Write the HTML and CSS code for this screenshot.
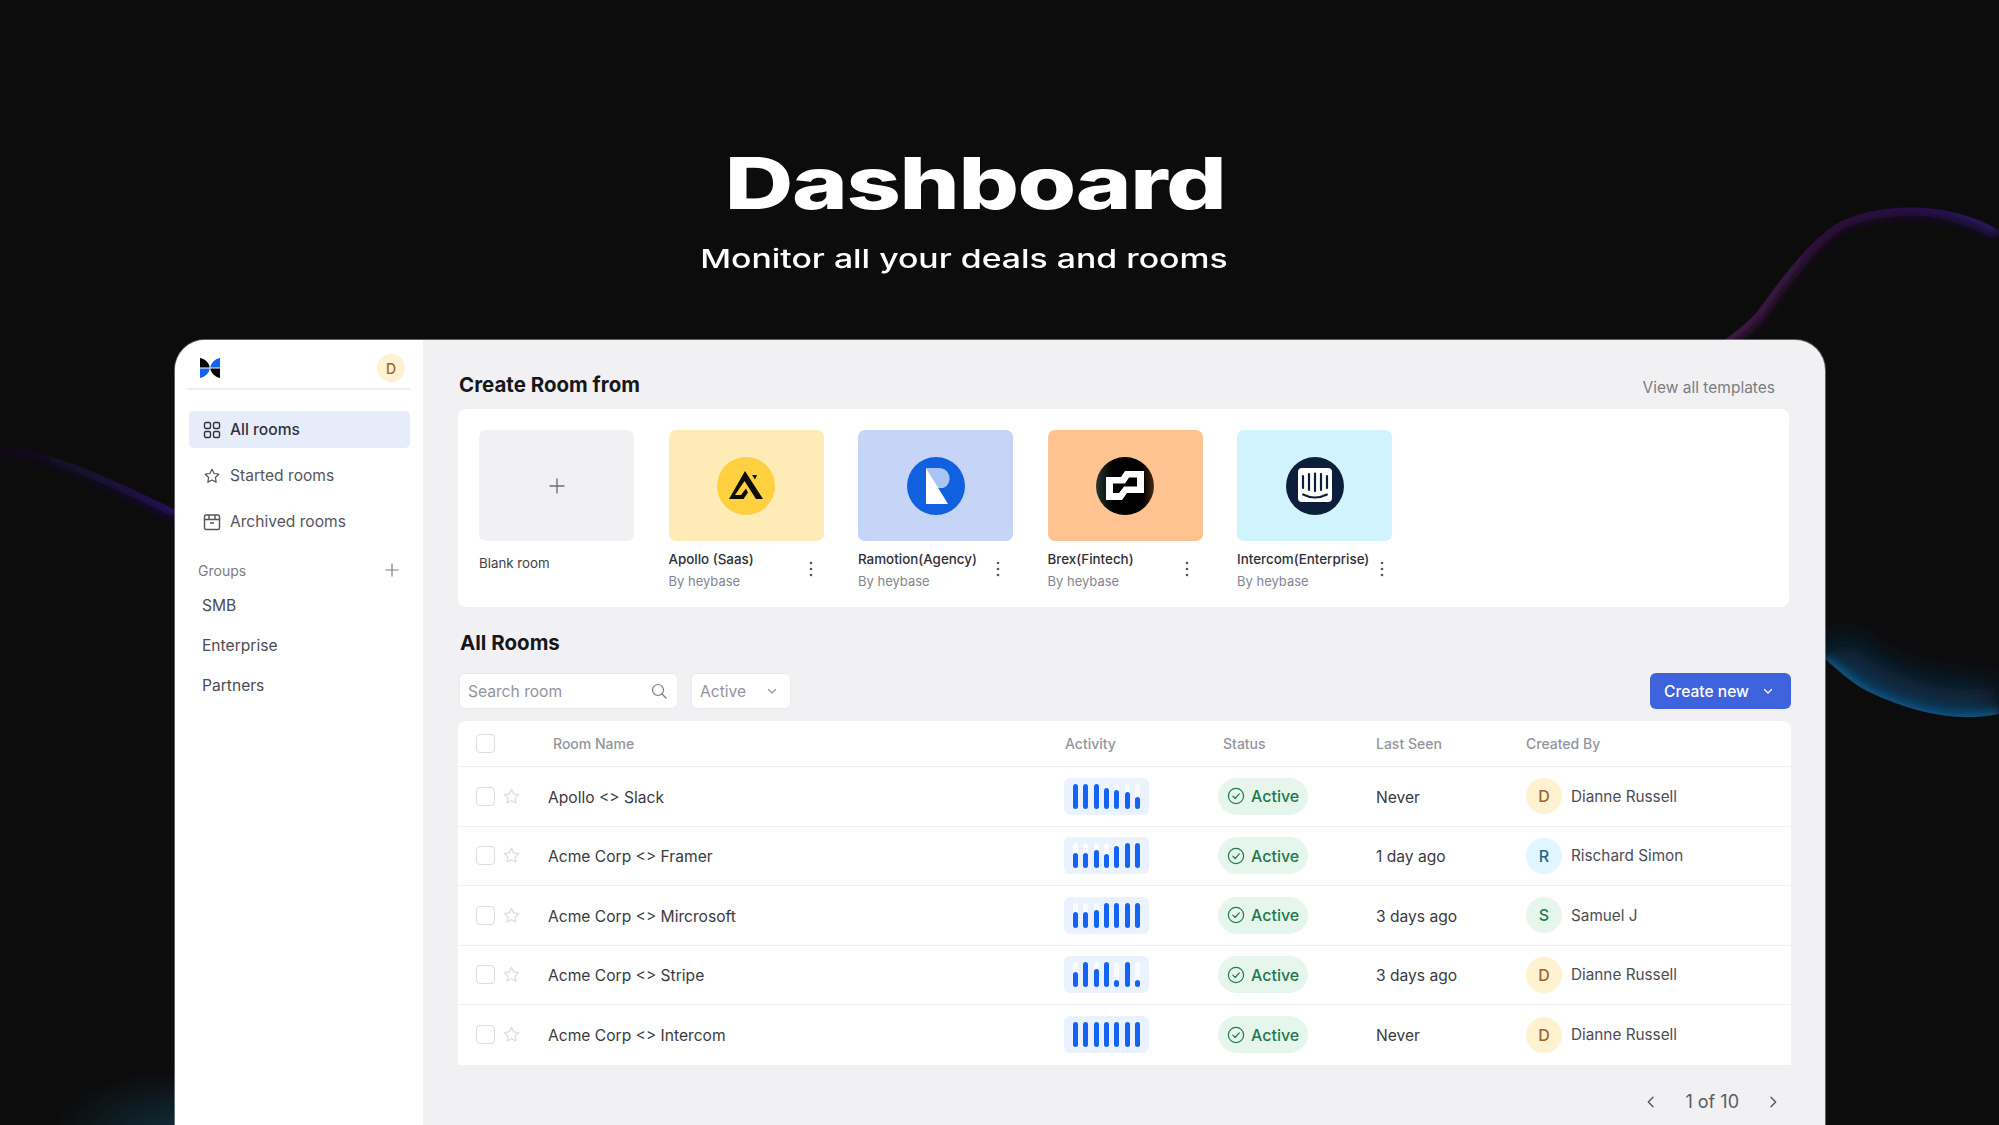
FILE: index.html
```html
<!DOCTYPE html>
<html lang="en">

<head>
    <meta charset="UTF-8">
    <meta name="viewport" content="width=device-width, initial-scale=1.0">
    <title>Dashboard</title>
    <link rel="stylesheet" href="styles.css">
</head>

<body>
    <svg class="backdrop" width="1999" height="1125" viewBox="0 0 1999 1125">
        <defs>
            <linearGradient id="edgetop" gradientUnits="userSpaceOnUse" x1="1990" y1="210" x2="1720" y2="340">
                <stop offset="0" stop-color="#2a1260" />
                <stop offset="0.45" stop-color="#2e1040" />
                <stop offset="1" stop-color="#461548" />
            </linearGradient>
            <linearGradient id="edgeleft" gradientUnits="userSpaceOnUse" x1="0" y1="0" x2="175" y2="0">
                <stop offset="0" stop-color="#1c0f40" stop-opacity="0.2" />
                <stop offset="1" stop-color="#2a1068" />
            </linearGradient>
            <radialGradient id="glow">
                <stop offset="0" stop-color="#11303f" />
                <stop offset="1" stop-color="#11303f" stop-opacity="0" />
            </radialGradient>
            <filter id="soft" x="-20%" y="-40%" width="140%" height="180%">
                <feGaussianBlur stdDeviation="5" />
            </filter>
            <filter id="softer" x="-20%" y="-60%" width="140%" height="220%">
                <feGaussianBlur stdDeviation="16" />
            </filter>
            <clipPath id="blobright">
                <path d="M1700 358C1722 342 1745 326 1757 312C1772 292 1800 250 1833 226C1860 208 1920 200 1967 216C1980 220 1990 225 1999 230L1999 714C1960 722 1917 715 1867 691C1850 682 1838 670 1825 659L1700 560Z" />
            </clipPath>
            <clipPath id="blobleft">
                <path d="M0 446C50 450 110 478 180 512L180 700L0 700Z" />
            </clipPath>
        </defs>
        <g clip-path="url(#blobright)">
            <path d="M1700 358C1722 342 1745 326 1757 312C1772 292 1800 250 1833 226C1860 208 1920 200 1967 216C1980 220 1990 225 1999 230"
                fill="none" stroke="url(#edgetop)" stroke-width="16" filter="url(#soft)" />
            <path d="M1999 714C1960 722 1917 715 1867 691C1850 682 1838 670 1825 659" fill="none" stroke="#0a3350" stroke-width="56" filter="url(#softer)" />
            <path d="M1999 714C1960 722 1917 715 1867 691C1850 682 1838 670 1825 659" fill="none" stroke="#0f5f8f" stroke-width="8" filter="url(#soft)" />
        </g>
        <g clip-path="url(#blobleft)">
            <path d="M0 446C50 450 110 478 180 512" fill="none" stroke="url(#edgeleft)" stroke-width="14" filter="url(#soft)" />
        </g>
        <ellipse cx="180" cy="1140" rx="130" ry="70" fill="url(#glow)" />
    </svg>

    <svg class="sprites" width="0" height="0">
        <symbol id="i-star" viewBox="0 0 24 24">
            <path d="M12 3l2.8 5.7 6.2.9-4.5 4.4 1.1 6.2L12 17.3l-5.6 2.9 1.1-6.2L3 9.6l6.2-.9z" fill="none" stroke="currentColor" stroke-width="1.6" stroke-linejoin="round" />
        </symbol>
        <symbol id="i-chevron" viewBox="0 0 12 12">
            <path d="M2.5 4.5L6 8l3.5-3.5" fill="none" stroke="currentColor" stroke-width="1.2" stroke-linecap="round" stroke-linejoin="round" />
        </symbol>
        <symbol id="i-plus" viewBox="0 0 14 14">
            <path d="M7 .5v13M.5 7h13" fill="none" stroke="currentColor" stroke-width="1.2" />
        </symbol>
        <symbol id="i-more" viewBox="0 0 4 16">
            <circle cx="2" cy="2" r="1.3" fill="currentColor" />
            <circle cx="2" cy="8" r="1.3" fill="currentColor" />
            <circle cx="2" cy="14" r="1.3" fill="currentColor" />
        </symbol>
        <symbol id="i-check" viewBox="0 0 18 18">
            <circle cx="9" cy="9" r="7.6" fill="none" stroke="currentColor" stroke-width="1.2" />
            <path d="M5.8 9.2l2.3 2.3 4.2-4.6" fill="none" stroke="currentColor" stroke-width="1.2" stroke-linecap="round" stroke-linejoin="round" />
        </symbol>
    </svg>

    <header class="hero">
        <h1 class="hero-title">Dashboard</h1>
        <p class="hero-sub">Monitor all your deals and rooms</p>
    </header>

    <div class="window">
        <aside class="sidebar">
            <div class="brand">
                <svg width="20" height="20" viewBox="0 0 19 19">
                    <path d="M0 0C5 1 9 5 9.2 9H0Z" fill="#050505" />
                    <path d="M0 10H9.2C9 14 5 18 0 19Z" fill="#1463f3" />
                    <path d="M19 0C14 1 10.2 5 9.8 9H19Z" fill="#1463f3" />
                    <path d="M9.8 10H19V19C14 18 10.2 14 9.8 10Z" fill="#050505" />
                </svg>
                <span class="avatar avatar-yellow avatar-small">D</span>
            </div>

            <nav class="nav">
                <a class="nav-item active">
                    <svg width="18" height="18" viewBox="0 0 18 18" fill="none" stroke="currentColor" stroke-width="1.4">
                        <rect x="1.5" y="1.5" width="6" height="6" rx="1.5" />
                        <rect x="10.5" y="1.5" width="6" height="6" rx="1.5" />
                        <rect x="1.5" y="10.5" width="6" height="6" rx="1.5" />
                        <rect x="10.5" y="10.5" width="6" height="6" rx="1.5" />
                    </svg>
                    All rooms
                </a>
                <a class="nav-item">
                    <svg width="18" height="18"><use href="#i-star" /></svg>
                    Started rooms
                </a>
                <a class="nav-item">
                    <svg width="18" height="18" viewBox="0 0 18 18" fill="none" stroke="currentColor" stroke-width="1.4">
                        <rect x="1.5" y="2" width="15" height="14.5" rx="1.5" />
                        <path d="M1.5 6.5h15M7 10h4M6 2v4.500M12 2v4.500" />
                    </svg>
                    Archived rooms
                </a>
            </nav>

            <div class="groups-head">
                <span>Groups</span>
                <svg width="14" height="14"><use href="#i-plus" /></svg>
            </div>
            <ul class="groups">
                <li>SMB</li>
                <li>Enterprise</li>
                <li>Partners</li>
            </ul>
        </aside>

        <main class="main">
            <div class="section-head">
                <h2>Create Room from</h2>
                <a class="view-all">View all templates</a>
            </div>

            <section class="templates">
                <div class="template">
                    <div class="thumb thumb-blank">
                        <svg width="16" height="16"><use href="#i-plus" /></svg>
                    </div>
                    <div class="template-blank-name">Blank room</div>
                </div>

                <div class="template">
                    <div class="thumb thumb-apollo">
                        <svg width="58" height="58" viewBox="0 0 58 58">
                            <circle cx="29" cy="29" r="29" fill="#ffd03f" />
                            <path d="M28 14L46 42H39L27.500 24L18 38H24L29 31.500L31 35.500L26.500 42H12Z" fill="#0d0d0a" />
                            <path d="M35 18H40L38 22.500Z" fill="#0d0d0a" />
                        </svg>
                    </div>
                    <div class="template-info">
                        <div><b>Apollo (Saas)</b><span>By heybase</span></div>
                        <svg class="more more-apollo" width="4" height="18"><use href="#i-more" /></svg>
                    </div>
                </div>

                <div class="template">
                    <div class="thumb thumb-ramotion">
                        <svg width="58" height="58" viewBox="0 0 58 58">
                            <circle cx="29" cy="29" r="29" fill="#1160e0" />
                            <path d="M19 11H31A10.500 10.500 0 0 1 36.500 31H30Z" fill="#a9c5f5" />
                            <path d="M19 11V47H41Z" fill="#fff" />
                        </svg>
                    </div>
                    <div class="template-info">
                        <div><b>Ramotion(Agency)</b><span>By heybase</span></div>
                        <svg class="more more-ramotion" width="4" height="18"><use href="#i-more" /></svg>
                    </div>
                </div>

                <div class="template">
                    <div class="thumb thumb-brex">
                        <svg width="58" height="58" viewBox="0 0 58 58">
                            <defs>
                                <linearGradient id="brexfill">
                                    <stop offset="0" stop-color="#25362e" />
                                    <stop offset="0.3" stop-color="#000" />
                                    <stop offset="0.8" stop-color="#000" />
                                    <stop offset="1" stop-color="#4a2a12" />
                                </linearGradient>
                            </defs>
                            <circle cx="29" cy="29" r="29" fill="url(#brexfill)" />
                            <path fill-rule="evenodd" fill="#fff" d="M10 20H25L29 14H48V36H31L26 43H10ZM17 26.500V36H23L28 29.500H41V20.500H33L29 26.500Z" />
                        </svg>
                    </div>
                    <div class="template-info">
                        <div><b>Brex(Fintech)</b><span>By heybase</span></div>
                        <svg class="more more-brex" width="4" height="18"><use href="#i-more" /></svg>
                    </div>
                </div>

                <div class="template">
                    <div class="thumb thumb-intercom">
                        <svg width="58" height="58" viewBox="0 0 58 58">
                            <circle cx="29" cy="29" r="29" fill="#0b1f3a" />
                            <rect x="12" y="11" width="34" height="34" rx="4" fill="#fff" />
                            <path d="M17 19V31M23 17V33M29 16.500V34M35 17V33M41 19V31" stroke="#0b1f3a" stroke-width="2.200" stroke-linecap="round" />
                            <path d="M17 37.500Q29 43.500 41 37.500" fill="none" stroke="#0b1f3a" stroke-width="2" stroke-linecap="round" />
                        </svg>
                    </div>
                    <div class="template-info">
                        <div><b>Intercom(Enterprise)</b><span>By heybase</span></div>
                        <svg class="more more-intercom" width="4" height="18"><use href="#i-more" /></svg>
                    </div>
                </div>
            </section>

            <h2 class="rooms-title">All Rooms</h2>

            <div class="toolbar">
                <div class="search">
                    <span>Search room</span>
                    <svg width="16" height="16" viewBox="0 0 16 16" fill="none" stroke="#7b7b85" stroke-width="1.2">
                        <circle cx="7" cy="7" r="5.500" />
                        <path d="M11 11l4 4" stroke-linecap="round" />
                    </svg>
                </div>
                <div class="filter">
                    <span>Active</span>
                    <svg width="12" height="12"><use href="#i-chevron" /></svg>
                </div>
                <button class="create">
                    Create new
                    <svg width="12" height="12"><use href="#i-chevron" /></svg>
                </button>
            </div>

            <div class="table">
                <div class="row row-head">
                    <div class="cell-check"><i class="checkbox"></i></div>
                    <div class="th-name">Room Name</div>
                    <div class="th-activity">Activity</div>
                    <div class="th-status">Status</div>
                    <div>Last Seen</div>
                    <div>Created By</div>
                </div>

                <div class="row">
                    <div class="cell-check"><i class="checkbox"></i><svg class="star" width="19" height="19"><use href="#i-star" /></svg></div>
                    <div class="room-name">Apollo &lt;&gt; Slack</div>
                    <div class="activity">
                        <i><b style="height:100%"></b></i><i><b style="height:100%"></b></i><i><b style="height:100%"></b></i><i><b style="height:84%"></b></i><i><b style="height:76%"></b></i><i><b style="height:67%"></b></i><i><b style="height:47%"></b></i>
                    </div>
                    <div><span class="badge"><svg width="18" height="18"><use href="#i-check" /></svg>Active</span></div>
                    <div class="seen">Never</div>
                    <div class="owner"><span class="avatar avatar-yellow">D</span>Dianne Russell</div>
                </div>

                <div class="row">
                    <div class="cell-check"><i class="checkbox"></i><svg class="star" width="19" height="19"><use href="#i-star" /></svg></div>
                    <div class="room-name">Acme Corp &lt;&gt; Framer</div>
                    <div class="activity">
                        <i><b style="height:60%"></b></i><i><b style="height:60%"></b></i><i><b style="height:75%"></b></i><i><b style="height:57%"></b></i><i><b style="height:90%"></b></i><i><b style="height:100%"></b></i><i><b style="height:100%"></b></i>
                    </div>
                    <div><span class="badge"><svg width="18" height="18"><use href="#i-check" /></svg>Active</span></div>
                    <div class="seen">1 day ago</div>
                    <div class="owner"><span class="avatar avatar-blue">R</span>Rischard Simon</div>
                </div>

                <div class="row">
                    <div class="cell-check"><i class="checkbox"></i><svg class="star" width="19" height="19"><use href="#i-star" /></svg></div>
                    <div class="room-name">Acme Corp &lt;&gt; Mircrosoft</div>
                    <div class="activity">
                        <i><b style="height:62%"></b></i><i><b style="height:62%"></b></i><i><b style="height:72%"></b></i><i><b style="height:100%"></b></i><i><b style="height:100%"></b></i><i><b style="height:100%"></b></i><i><b style="height:100%"></b></i>
                    </div>
                    <div><span class="badge"><svg width="18" height="18"><use href="#i-check" /></svg>Active</span></div>
                    <div class="seen">3 days ago</div>
                    <div class="owner"><span class="avatar avatar-green">S</span>Samuel J</div>
                </div>

                <div class="row">
                    <div class="cell-check"><i class="checkbox"></i><svg class="star" width="19" height="19"><use href="#i-star" /></svg></div>
                    <div class="room-name">Acme Corp &lt;&gt; Stripe</div>
                    <div class="activity">
                        <i><b style="height:63%"></b></i><i><b style="height:100%"></b></i><i><b style="height:75%"></b></i><i><b style="height:100%"></b></i><i><b style="height:30%"></b></i><i><b style="height:100%"></b></i><i><b style="height:30%"></b></i>
                    </div>
                    <div><span class="badge"><svg width="18" height="18"><use href="#i-check" /></svg>Active</span></div>
                    <div class="seen">3 days ago</div>
                    <div class="owner"><span class="avatar avatar-yellow">D</span>Dianne Russell</div>
                </div>

                <div class="row">
                    <div class="cell-check"><i class="checkbox"></i><svg class="star" width="19" height="19"><use href="#i-star" /></svg></div>
                    <div class="room-name">Acme Corp &lt;&gt; Intercom</div>
                    <div class="activity">
                        <i><b style="height:100%"></b></i><i><b style="height:100%"></b></i><i><b style="height:100%"></b></i><i><b style="height:100%"></b></i><i><b style="height:100%"></b></i><i><b style="height:100%"></b></i><i><b style="height:100%"></b></i>
                    </div>
                    <div><span class="badge"><svg width="18" height="18"><use href="#i-check" /></svg>Active</span></div>
                    <div class="seen">Never</div>
                    <div class="owner"><span class="avatar avatar-yellow">D</span>Dianne Russell</div>
                </div>
            </div>

            <div class="pager">
                <svg width="16" height="16" viewBox="0 0 12 12"><path d="M7.500 2.500L4 6l3.500 3.500" fill="none" stroke="currentColor" stroke-width="1.100" stroke-linecap="round" stroke-linejoin="round" /></svg>
                <span>1 of 10</span>
                <svg width="16" height="16" viewBox="0 0 12 12"><path d="M4.500 2.500L8 6 4.500 9.500" fill="none" stroke="currentColor" stroke-width="1.100" stroke-linecap="round" stroke-linejoin="round" /></svg>
            </div>
        </main>
    </div>
</body>

</html>
```

FILE: styles.css
```css
* {
    box-sizing: border-box;
}

html,
body {
    margin: 0;
    height: 100%;
}

body {
    position: relative;
    display: flex;
    flex-direction: column;
    height: 1125px;
    overflow: hidden;
    background-color: #0c0c0d;
    font-family: Inter, "Liberation Sans", sans-serif;
    font-size: 15.6px;
    color: #3a3a40;
}

.backdrop {
    position: absolute;
    top: 0;
    left: 0;
}

.sprites {
    position: absolute;
}

/* hero */

.hero {
    position: relative;
    display: flex;
    flex: none;
    flex-direction: column;
    align-items: center;
    height: 340px;
    padding-top: 140px;
    color: #fff;
}

.hero-title {
    margin: 0 48px 0 0;
    font-size: 72px;
    line-height: 86px;
    font-weight: 800;
    letter-spacing: -1px;
    transform: scaleX(1.317);
}

.hero-sub {
    margin: 16px 71px 0 0;
    font-size: 26px;
    line-height: 34px;
    font-weight: 500;
    transform: scaleX(1.3);
}

/* window */

.window {
    position: relative;
    display: flex;
    flex: 1;
    width: 1650px;
    margin-left: 175px;
    overflow: hidden;
    border-radius: 30px 30px 0 0;
    background-color: #f1f1f3;
    box-shadow: 0 0 0 1px rgba(255, 255, 255, 0.35);
}

.sidebar {
    flex: none;
    width: 248px;
    padding: 0 13px 0 12px;
    background-color: #fff;
}

.brand {
    display: flex;
    align-items: center;
    justify-content: space-between;
    height: 50px;
    padding: 8px 5px 0 13px;
    border-bottom: 2px solid #eeeeef;
}

.avatar {
    display: flex;
    flex: none;
    align-items: center;
    justify-content: center;
    width: 36px;
    height: 36px;
    border-radius: 50%;
    font-size: 16px;
    font-weight: 500;
}

.avatar-small {
    width: 28px;
    height: 28px;
    font-size: 14px;
}

.avatar-yellow {
    background-color: #fff2d1;
    color: #a3622b;
}

.avatar-blue {
    background-color: #e1f6fe;
    color: #23668c;
}

.avatar-green {
    background-color: #e7f6ec;
    color: #1f7a4d;
}

.nav {
    margin: 21px 0 0 2px;
}

.nav-item {
    display: flex;
    align-items: center;
    gap: 9px;
    height: 37px;
    margin-bottom: 9px;
    padding-left: 14px;
    border-radius: 5px;
    color: #55555d;
}

.nav-item.active {
    background-color: #e7ecfb;
    color: #33333a;
    font-weight: 500;
}

.groups-head {
    display: flex;
    align-items: center;
    justify-content: space-between;
    height: 20px;
    margin-top: 20px;
    padding: 0 11px 0 11px;
    font-size: 14px;
    color: #7d7d87;
}

.groups {
    margin: 6px 0 0;
    padding: 0 0 0 15px;
    list-style: none;
    color: #4c4c54;
}

.groups li {
    height: 40.2px;
    line-height: 40px;
}

/* main */

.main {
    flex: 1;
    padding: 28px 34px 0;
}

h2 {
    margin: 0;
    font-size: 20.5px;
    font-weight: 700;
    color: #17171a;
}

.section-head {
    display: flex;
    align-items: center;
    justify-content: space-between;
    height: 32px;
    margin: 0 16px 9px 2px;
}

.view-all {
    margin-top: 6px;
    font-size: 15.5px;
    color: #7c7c85;
}

.templates {
    display: flex;
    gap: 34.5px;
    height: 198px;
    margin: 0 2px 0 1px;
    padding: 21px 21px 0;
    border-radius: 8px;
    background-color: #fff;
}

.template {
    width: 155px;
}

.thumb {
    display: flex;
    align-items: center;
    justify-content: center;
    height: 111px;
    border-radius: 7px;
}

.thumb-blank {
    background-color: #f1f1f3;
    color: #6c6c74;
}

.thumb-apollo {
    background-color: #ffebb5;
}

.thumb-ramotion {
    background-color: #c6d4f8;
}

.thumb-brex {
    background-color: #ffc291;
}

.thumb-intercom {
    background-color: #d1f3fd;
}

.template-blank-name {
    margin-top: 13px;
    font-size: 13.3px;
    line-height: 18px;
    color: #3f3f46;
}

.template-info {
    display: flex;
    align-items: center;
    justify-content: space-between;
    margin-top: 8px;
    white-space: nowrap;
}

.template-info b,
.template-info span {
    display: block;
    line-height: 20px;
}

.template-info b {
    font-size: 13.4px;
    font-weight: 500;
    color: #2f2f35;
}

.template-info span {
    margin-top: 2px;
    font-size: 13px;
    color: #85858e;
}

.more {
    flex: none;
    margin-bottom: 3px;
    color: #55555d;
}

.more-apollo {
    margin-right: 11px;
}

.more-ramotion {
    margin-right: 13px;
}

.more-brex {
    margin-right: 14px;
}

.more-intercom {
    margin-right: 8px;
}

.rooms-title {
    height: 24px;
    margin: 24px 0 18px 3px;
    line-height: 24px;
}

.toolbar {
    display: flex;
    align-items: center;
    gap: 13px;
    height: 36px;
    margin: 0 0 12px 2px;
}

.search,
.filter {
    display: flex;
    align-items: center;
    justify-content: space-between;
    height: 36px;
    padding: 0 10px 0 8px;
    border: 1px solid #ebebee;
    border-radius: 6px;
    background-color: #fff;
    color: #94949d;
}

.search {
    width: 219px;
}

.filter {
    width: 100px;
    padding-right: 12px;
}

.create {
    display: flex;
    align-items: center;
    justify-content: space-between;
    width: 141px;
    height: 36px;
    margin-left: auto;
    padding: 0 17px 0 14px;
    border: 0;
    border-radius: 6px;
    background-color: #3f63dd;
    font: inherit;
    font-weight: 500;
    color: #fff;
}

/* table */

.table {
    margin-left: 1px;
    overflow: hidden;
    border-radius: 8px 8px 0 0;
    background-color: #fff;
}

.row {
    display: grid;
    grid-template-columns: 90px 516px 154px 158px 150px 1fr;
    align-items: center;
    height: 59.5px;
    border-bottom: 1px solid #f1f1f3;
    color: #3a3a40;
}

.row:last-child {
    border-bottom: 0;
}

.row-head {
    height: 46px;
    font-size: 14px;
    font-weight: 500;
    color: #94949d;
}

.th-name {
    padding-left: 5px;
}

.th-activity {
    padding-left: 1px;
}

.th-status {
    padding-left: 5px;
}

.room-name,
.seen {
    padding-top: 2px;
}

.cell-check {
    display: flex;
    align-items: center;
    gap: 7px;
    padding-left: 18px;
}

.checkbox {
    flex: none;
    width: 19px;
    height: 19px;
    border: 1.5px solid #dcdce3;
    border-radius: 4px;
}

.star {
    flex: none;
    color: #dcdce5;
}

.activity {
    display: flex;
    justify-content: space-between;
    width: 85px;
    height: 37px;
    padding: 6px 9px;
    border-radius: 6px;
    background-color: #ebf2ff;
}

.activity i {
    display: flex;
    align-items: flex-end;
    width: 5px;
    border-radius: 3px;
    background-color: #fbfcff;
}

.activity b {
    display: block;
    width: 100%;
    border-radius: 3px;
    background-color: #1463f3;
}

.badge {
    display: inline-flex;
    align-items: center;
    gap: 6px;
    width: 90px;
    height: 37px;
    padding-left: 9px;
    border-radius: 19px;
    background-color: #e7f6ec;
    font-size: 16px;
    font-weight: 500;
    color: #1f7a4d;
}

.owner {
    display: flex;
    align-items: center;
    gap: 9px;
    font-size: 15.3px;
    color: #4c4c54;
}

.pager {
    display: flex;
    align-items: center;
    justify-content: flex-end;
    gap: 26px;
    height: 34px;
    margin-top: 20px;
    padding-right: 10px;
    font-size: 18px;
    color: #5a5a62;
}
```
